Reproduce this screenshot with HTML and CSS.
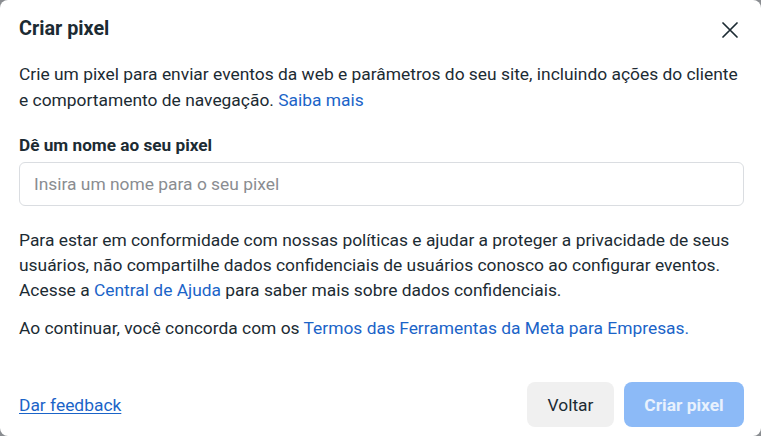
FILE: index.html
```html
<!DOCTYPE html>
<html lang="pt-BR">
<head>
<meta charset="utf-8">
<title>Criar pixel</title>
<link rel="stylesheet" href="styles.css">
</head>
<body>
<div class="modal">
  <header class="modal-header">
    <h1 class="title">Criar pixel</h1>
    <button class="close" aria-label="Fechar">
      <svg width="16" height="16" viewBox="0 0 16 16"><path d="M1 1L15 15M15 1L1 15" stroke="#1c2b33" stroke-width="1.7" stroke-linecap="round"/></svg>
    </button>
  </header>
  <p class="intro">Crie um pixel para enviar eventos da web e parâmetros do seu site, incluindo ações do cliente e comportamento de navegação. <a class="link" href="#">Saiba mais</a></p>
  <label class="label" for="name">Dê um nome ao seu pixel</label>
  <input id="name" class="input" type="text" placeholder="Insira um nome para o seu pixel">
  <p class="notice">Para estar em conformidade com nossas políticas e ajudar a proteger a privacidade de seus usuários, não compartilhe dados confidenciais de usuários conosco ao configurar eventos. Acesse a <a class="link" href="#">Central de Ajuda</a> para saber mais sobre dados confidenciais.</p>
  <p class="terms">Ao continuar, você concorda com os <a class="link" href="#">Termos das Ferramentas da Meta para Empresas.</a></p>
  <footer class="modal-footer">
    <a class="feedback" href="#">Dar feedback</a>
    <div class="actions">
      <button class="btn btn-secondary">Voltar</button>
      <button class="btn btn-primary" disabled>Criar pixel</button>
    </div>
  </footer>
</div>
</body>
</html>
```
FILE: styles.css
```css
* { box-sizing: border-box; }
html, body { margin: 0; padding: 0; }
body {
  background: #8a8d91;
  font-family: Roboto, "Liberation Sans", Arial, sans-serif;
  color: #1c2b33;
  width: 761px;
  height: 436px;
  overflow: hidden;
}
.modal {
  background: #fff;
  width: 761px;
  height: 436px;
  border-radius: 8px;
  padding: 0 17px 0 19px;
  display: flex;
  flex-direction: column;
}
.modal-header {
  height: 58px;
  display: flex;
  align-items: center;
  justify-content: space-between;
}
.title {
  margin: 0;
  font-size: 19.8px;
  font-weight: 700;
  line-height: 22px;
  color: #1c2b33;
}
.close {
  border: 0;
  background: none;
  padding: 0;
  width: 24px;
  height: 24px;
  display: flex;
  align-items: center;
  justify-content: center;
  margin-right: 2px;
  margin-top: 2px;
}
.intro {
  margin: 3px 0 0;
  font-size: 17.4px;
  line-height: 26px;
}
.link {
  color: #1b64c8;
  text-decoration: none;
}
.label {
  display: block;
  margin-top: 22px;
  font-size: 17.2px;
  font-weight: 700;
  line-height: 20px;
}
.input {
  display: block;
  margin-top: 7px;
  width: 725px;
  height: 44px;
  border: 1px solid #dadde1;
  border-radius: 6px;
  padding: 0 14px;
  font-family: inherit;
  font-size: 17.4px;
  color: #1c2b33;
  outline: none;
}
.input::placeholder { color: #8a8d91; }
.notice {
  margin: 22px 0 0;
  font-size: 17.4px;
  line-height: 25px;
}
.terms {
  margin: 13px 0 0;
  font-size: 17.4px;
  line-height: 25px;
}
.modal-footer {
  margin-top: auto;
  margin-bottom: 9px;
  width: 725px;
  display: flex;
  align-items: center;
  justify-content: space-between;
}
.feedback {
  color: #1b64c8;
  font-size: 17.4px;
  text-decoration: underline;
  text-underline-offset: 2px;
}
.actions {
  display: flex;
  gap: 10px;
}
.btn {
  height: 45px;
  border: 0;
  border-radius: 8px;
  font-family: inherit;
  font-size: 17.4px;
  padding: 0;
}
.btn-secondary {
  width: 87px;
  background: #f0f0f0;
  color: #1c2b33;
}
.btn-primary {
  width: 120px;
  background: #8cbaf7;
  color: #e8f1fd;
  font-weight: 700;
}
```
